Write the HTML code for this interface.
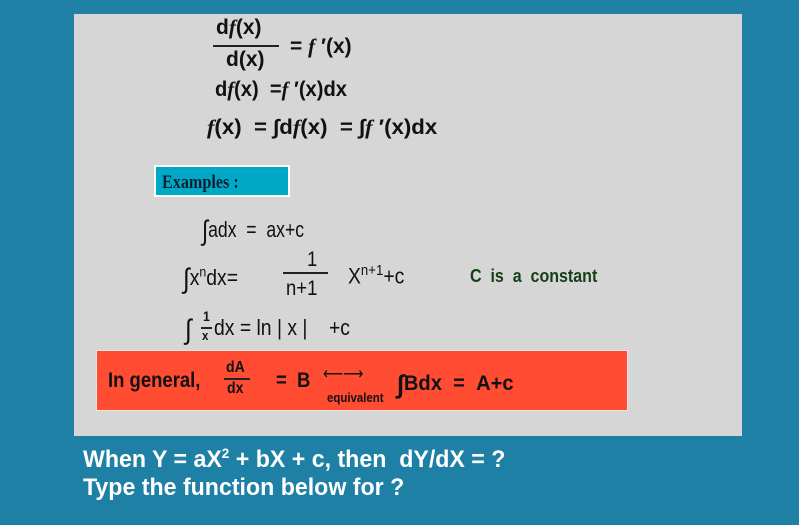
<!DOCTYPE html>
<html><head><meta charset="utf-8"><style>
body{margin:0;width:799px;height:525px;background:#1f80a6;position:relative;overflow:hidden;font-family:"Liberation Sans",sans-serif;}
.p{position:absolute;left:74px;top:14px;width:668px;height:422px;background:#d6d6d6;}
.t{position:absolute;white-space:nowrap;color:#111;font-size:21px;line-height:1;font-weight:bold;transform:scaleX(0.88);transform-origin:left top;}
.m{transform:scaleX(1.0);}
.f{font-family:"Liberation Serif",serif;font-style:italic;}
.bar{position:absolute;height:2px;background:#222;}
.ex{position:absolute;left:154px;top:165px;width:132px;height:28px;background:#00a8c8;border:2px solid #fff;}
.red{position:absolute;left:96px;top:350px;width:530px;height:59px;background:#ff4c33;border:1px solid #f3e3df;}
.w{position:absolute;color:#fff;font-family:"Liberation Sans",sans-serif;font-weight:bold;font-size:24px;white-space:nowrap;transform:scaleX(0.965);transform-origin:left top;line-height:1;}
</style></head><body>
<div class="p"></div>
<div class="t m" style="left:216px;top:17px">d<span class="f">f</span>(x)</div>
<div class="bar" style="left:213px;top:45px;width:66px"></div>
<div class="t m" style="left:226px;top:49px">d(x)</div>
<div class="t m" style="left:290px;top:36px">= <span class="f">f</span> ′(x)</div>
<div class="t" style="left:215px;top:79px;transform:scaleX(0.96)">d<span class="f">f</span>(x) &nbsp;=<span class="f">f</span> ′(x)dx</div>
<div class="t" style="left:207px;top:117px;transform:scaleX(1.06)"><span class="f">f</span>(x) &nbsp;= ∫d<span class="f">f</span>(x) &nbsp;= ∫<span class="f">f</span> ′(x)dx</div>
<div class="ex"></div>
<div class="t" style="left:162px;top:173px;font-family:'Liberation Serif',serif;font-weight:bold;font-size:19px;color:#0a2030;transform:scaleX(0.85)">Examples :</div>
<div class="t" style="left:202px;top:214px;font-weight:normal;font-size:22px;transform:scaleX(0.8)"><span style="font-size:28px;position:relative;top:3px">∫</span>adx &nbsp;= &nbsp;ax+c</div>
<div class="t" style="left:183px;top:262px;font-weight:normal;font-size:22px"><span style="font-size:28px;position:relative;top:3px">∫</span>x<sup style="font-size:14px">n</sup>dx=</div>
<div class="t" style="left:307px;top:249px;font-weight:normal">1</div>
<div class="bar" style="left:283px;top:272px;width:45px"></div>
<div class="t" style="left:286px;top:278px;font-weight:normal">n+1</div>
<div class="t" style="left:348px;top:263px;font-weight:normal;font-size:22px">X<sup style="font-size:15px">n+1</sup>+c</div>
<div class="t" style="left:470px;top:267px;font-size:18px;color:#163f16;transform:scaleX(0.89)">C &nbsp;is &nbsp;a &nbsp;constant</div>
<div class="t" style="left:185px;top:313px;font-weight:normal;font-size:22px"><span style="font-size:28px;position:relative;top:3px">∫</span></div>
<div class="t" style="left:203px;top:309px;font-size:14px">1</div>
<div class="bar" style="left:201px;top:327px;width:11px"></div>
<div class="t" style="left:202px;top:329px;font-size:13px">x</div>
<div class="t" style="left:214px;top:317px;font-weight:normal;font-size:22px">dx = ln | x | &nbsp;&nbsp; +c</div>
<div class="red"></div>
<div class="t" style="left:108px;top:370px;font-size:21px">In general,</div>
<div class="t" style="left:226px;top:360px;font-size:16px">dA</div>
<div class="bar" style="left:224px;top:378px;width:26px"></div>
<div class="t" style="left:227px;top:381px;font-size:16px">dx</div>
<div class="t" style="left:276px;top:370px;font-size:21px">= &nbsp;B</div>
<div class="t" style="left:323px;top:367px;font-size:16px;font-weight:normal">⟵⟶</div>
<div class="t" style="left:327px;top:391px;font-size:13px">equivalent</div>
<div class="t" style="left:397px;top:368px;font-size:21px;transform:scaleX(0.96)"><span style="font-size:26px;position:relative;top:3px">∫</span>Bdx &nbsp;= &nbsp;A+c</div>
<div class="w" style="left:83px;top:446px">When Y = aX<sup style="font-size:14px">2</sup> + bX + c, then &nbsp;dY/dX = ?</div>
<div class="w" style="left:83px;top:476px">Type the function below for ?</div>
</body></html>
